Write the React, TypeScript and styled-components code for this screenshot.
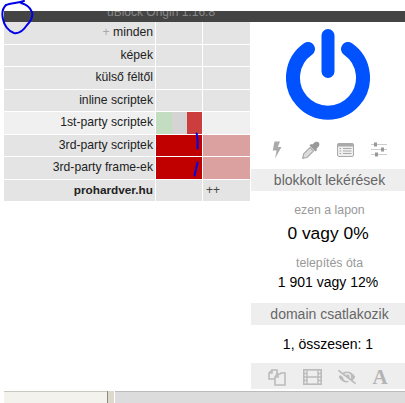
import React from 'react';
import styled, { createGlobalStyle } from 'styled-components';
import { FaEyeSlash } from 'react-icons/fa';

const GlobalStyle = createGlobalStyle`
  html, body {
    margin: 0;
    padding: 0;
    background: #fff;
    font-family: "Liberation Sans", Arial, sans-serif;
  }
`;

const Page = styled.div`
  position: relative;
  width: 405px;
  height: 403px;
  overflow: hidden;
  display: flex;
  flex-direction: column;
  padding-top: 11px;
  box-sizing: border-box;
`;

const TitleBar = styled.div`
  height: 11px;
  margin-left: 4px;
  background: #444;
  color: #888;
  font-size: 12px;
  line-height: 11px;
  overflow: hidden;
  padding-left: 103px;
  white-space: nowrap;
`;

const TitleText = styled.div`
  margin-top: -4px;
`;

const Body = styled.div`
  flex: 1;
  display: flex;
  padding-left: 4px;
`;

const Matrix = styled.div`
  width: 246px;
  margin-right: 1px;
  display: grid;
  grid-template-columns: 151px 46px 47px;
  grid-auto-rows: 21.55px;
  column-gap: 1px;
  row-gap: 1px;
  align-content: start;
`;

const Cell = styled.div<{ $bg?: string }>`
  background: ${(p) => p.$bg || '#e4e4e4'};
`;

const Label = styled(Cell)<{ $bold?: boolean }>`
  color: #222;
  font-size: ${(p) => (p.$bold ? 11.8 : 12.2)}px;
  font-weight: ${(p) => (p.$bold ? 700 : 400)};
  line-height: 21px;
  text-align: right;
  padding-right: 2px;
  white-space: nowrap;
`;

const Plus = styled.span`
  color: #aaa;
`;

const Rule = styled(Cell)`
  color: #444;
  font-size: 12px;
  line-height: 20px;
  padding-left: 3px;
`;

const Split = styled.div`
  display: flex;
`;

const Part = styled.div<{ $bg: string; $w: number }>`
  background: ${(p) => p.$bg};
  width: ${(p) => p.$w}px;
`;

const Side = styled.div`
  flex: 1;
  display: flex;
  flex-direction: column;
  align-items: stretch;
  text-align: center;
`;

const PowerWrap = styled.div`
  height: 108px;
  padding-top: 7px;
  box-sizing: border-box;
  display: flex;
  justify-content: center;
`;

const IconRow = styled.div`
  height: 39px;
  display: grid;
  grid-template-columns: repeat(4, 34px);
  justify-content: center;
  justify-items: center;
  align-items: center;
`;

const Band = styled.div`
  background: #eee;
  color: #666;
  font-size: 14px;
  height: 22px;
  line-height: 22px;
  padding-left: 3px;
`;

const Caption = styled.div<{ $top: number }>`
  color: #999;
  font-size: 12.3px;
  line-height: 14px;
  padding-left: 3px;
  margin-top: ${(p) => p.$top}px;
`;

const Stat = styled.div<{ $size: number; $top: number; $bottom?: number }>`
  color: #000;
  font-size: ${(p) => p.$size}px;
  line-height: 20px;
  margin-top: ${(p) => p.$top}px;
  margin-bottom: ${(p) => p.$bottom || 0}px;
`;

const Tools = styled.div`
  height: 26px;
  margin-top: 9px;
  padding-left: 8px;
  background: #eee;
  display: grid;
  grid-template-columns: 35px 36px 34px 32px;
  justify-items: center;
  align-items: center;
  color: #bbb;
  font-size: 18px;
  padding-top: 2px;
  box-sizing: border-box;
`;

const FontGlyph = styled.span`
  font-family: "Liberation Serif", "Times New Roman", serif;
  font-weight: 700;
  font-size: 21px;
  line-height: 24px;
  color: #b4b4b4;
`;

const Footer = styled.div`
  height: 12px;
  margin-left: 4px;
  display: flex;
`;

const FootLeft = styled.div`
  width: 103px;
  background: #f3f2ed;
  border-top: 1px solid #c8c7c0;
`;

const FootGrip = styled.div`
  width: 6px;
  background: #dcd8cc;
  border-left: 1px solid #8a8a80;
  border-right: 1px solid #fff;
`;

const FootRight = styled.div`
  flex: 1;
  background: #dcdcdc;
  border-top: 1px solid #bbb;
`;

const Scribble = styled.svg`
  position: absolute;
  left: 0;
  top: 0;
  pointer-events: none;
`;

const BoltIcon = () => (
  <svg width="10" height="18" viewBox="0 0 10 18">
    <path d="M2.5 0.5 L8 0.5 L5.8 6 L9.5 6 L3 17.5 L4.6 9.5 L0.7 9.5 Z" fill="#aaa" />
  </svg>
);

const DropperIcon = () => (
  <svg width="18" height="18" viewBox="0 0 18 18">
    <path d="M11.5 2.5 C13 0.5 15.5 0.3 16.8 1.5 C18 3 17.5 5 15.8 6.5 L14.5 7.8 L15 9 L13.5 10.5 L7.5 4.5 L9 3 L10.2 3.5 Z" fill="#999" />
    <path d="M8 6.5 L11.5 10 L5 16.5 L2.5 16.8 L1.2 17.5 L0.5 16.8 L1.2 15.5 L1.5 13 Z" fill="#ddd" stroke="#aaa" strokeWidth="1.2" />
  </svg>
);

const ListIcon = () => (
  <svg width="17" height="14" viewBox="0 0 17 14">
    <rect x="0.5" y="0.5" width="16" height="13" rx="1.5" fill="#eee" stroke="#aaa" />
    <rect x="0.5" y="0.5" width="16" height="3" fill="#aaa" />
    <path d="M2.5 5.5 H4 M6 5.5 H14.5 M2.5 8 H4 M6 8 H14.5 M2.5 10.5 H4 M6 10.5 H14.5" stroke="#aaa" strokeWidth="1.2" />
  </svg>
);

const SlidersIcon = () => (
  <svg width="16" height="15" viewBox="0 0 16 15">
    <path d="M0 2.5 H16 M0 7.5 H16 M0 12.5 H16" stroke="#ccc" strokeWidth="1" />
    <rect x="3" y="0.5" width="3" height="4" fill="#999" />
    <rect x="10" y="5.5" width="3" height="4" fill="#999" />
    <rect x="4" y="10.5" width="3" height="4" fill="#999" />
  </svg>
);

const CopyIcon = () => (
  <svg width="18" height="17" viewBox="0 0 18 17" fill="#eee" stroke="#bbb" strokeWidth="1.6">
    <path d="M4 1 H9 V10 H1 V4 Z" />
    <path d="M9 5 H12 L13 4 H17 V16 H7 V8 Z" />
    <path d="M4 1 V4 H1 M10 5 V8 H7" fill="none" />
  </svg>
);

const FilmIcon = () => (
  <svg width="19" height="16" viewBox="0 0 19 16">
    <rect x="0.8" y="0.8" width="17.4" height="14.4" fill="#eee" stroke="#bbb" strokeWidth="1.6" />
    <path d="M4 1 V15 M15 1 V15 M4 8 H15 M1 4.5 H4 M1 8 H4 M1 11.5 H4 M15 4.5 H18 M15 8 H18 M15 11.5 H18" stroke="#bbb" strokeWidth="1.4" />
  </svg>
);

const rows = ['képek', 'külső féltől', 'inline scriptek'];

export default function App() {
  return (
    <Page>
      <GlobalStyle />
      <TitleBar>
        <TitleText>uBlock Origin 1.16.8</TitleText>
      </TitleBar>
      <Body>
        <Matrix>
          <Label>
            <Plus>+</Plus> minden
          </Label>
          <Cell />
          <Cell />
          {rows.map((r) => (
            <React.Fragment key={r}>
              <Label>{r}</Label>
              <Cell />
              <Cell />
            </React.Fragment>
          ))}
          <Label $bg="#f0f0f0">1st-party scriptek</Label>
          <Split>
            <Part $bg="#c2ddc0" $w={16} />
            <Part $bg="#d4d4d4" $w={15} />
            <Part $bg="#cc3e3e" $w={15} />
          </Split>
          <Cell $bg="#f0f0f0" />
          <Label>3rd-party scriptek</Label>
          <Cell $bg="#c00000" />
          <Cell $bg="#dba0a0" />
          <Label>3rd-party frame-ek</Label>
          <Cell $bg="#c00000" />
          <Cell $bg="#dba0a0" />
          <Label $bold>prohardver.hu</Label>
          <Cell />
          <Rule>++</Rule>
        </Matrix>
        <Side>
          <PowerWrap>
            <svg width="84" height="92" viewBox="0 0 84 92">
              <path
                d="M22 20 A35 35 0 1 0 62 20"
                fill="none"
                stroke="#0052ff"
                strokeWidth="14"
                strokeLinecap="round"
              />
              <line x1="42" y1="6.5" x2="42" y2="42.5" stroke="#0052ff" strokeWidth="13" strokeLinecap="round" />
            </svg>
          </PowerWrap>
          <IconRow>
            <BoltIcon />
            <DropperIcon />
            <ListIcon />
            <SlidersIcon />
          </IconRow>
          <Band>blokkolt lekérések</Band>
          <Caption $top={12}>ezen a lapon</Caption>
          <Stat $size={17.4} $top={6}>0 vagy 0%</Stat>
          <Caption $top={13}>telepítés óta</Caption>
          <Stat $size={14} $top={2} $bottom={11}>1 901 vagy 12%</Stat>
          <Band>domain csatlakozik</Band>
          <Stat $size={14} $top={9}>1, összesen: 1</Stat>
          <Tools>
            <CopyIcon />
            <FilmIcon />
            <FaEyeSlash />
            <FontGlyph>A</FontGlyph>
          </Tools>
        </Side>
      </Body>
      <Footer>
        <FootLeft />
        <FootGrip />
        <FootRight />
      </Footer>
      <Scribble width="405" height="403" viewBox="0 0 405 403" fill="none" stroke="#0000e6" strokeWidth="2" strokeLinecap="round" strokeLinejoin="round">
        <path d="M24 1 C18 3 10 3 6 5 C2 9 2 15 3 19 C4 25 8 31 14 33 C19 34 23 31 27 25 C31 21 33 16 32 12 C30 7 25 4 21 3" />
        <path d="M196.7 133.5 C197.8 138 198 143 197.6 148.5" />
        <path d="M197.6 162.5 C196.5 167 195.5 171 194.6 175.5" />
      </Scribble>
    </Page>
  );
}
